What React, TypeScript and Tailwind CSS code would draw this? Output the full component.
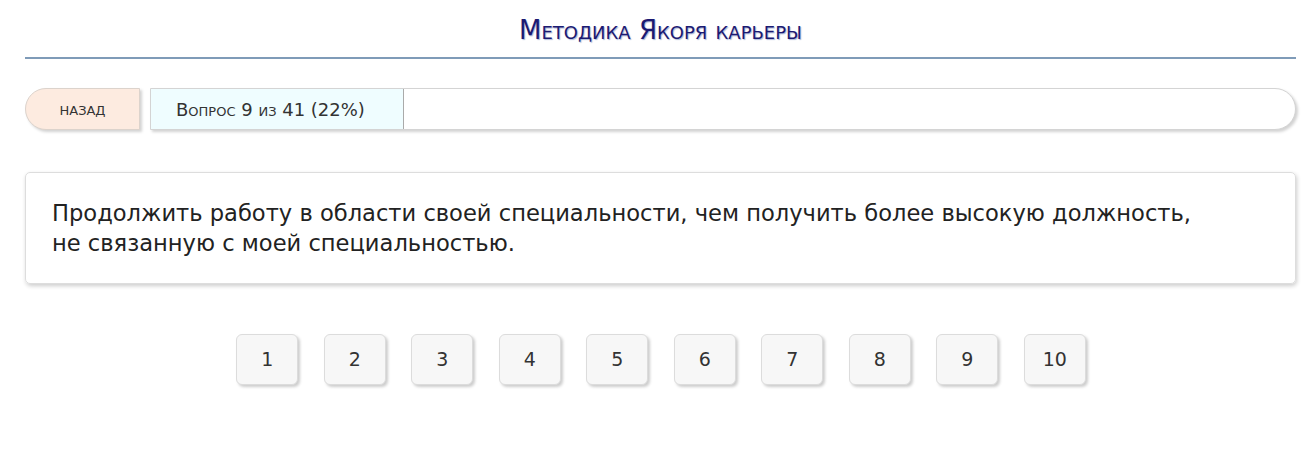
import React from 'react';

const answers = [1, 2, 3, 4, 5, 6, 7, 8, 9, 10];

export default function App() {
  return (
    <div className="min-h-screen bg-white pl-[25px] pr-[17px] font-['DejaVu_Sans',sans-serif] text-[#333]">
      {/* Header */}
      <h1 className="border-b-2 border-[#7f9bb8] pt-[14px] pb-[10px] text-center text-[26px] leading-[33px] text-[#1c1a72] [font-variant:small-caps] [text-shadow:1px_1px_1px_#a9b6d6]">
        Методика Якоря карьеры
      </h1>

      {/* Progress bar */}
      <div className="mt-[29px] flex h-[42px]">
        <button className="w-[115px] shrink-0 rounded-l-[21px] border border-[#dcd3cc] bg-[#fdebe0] pt-[3px] text-[13px] uppercase text-[#333] shadow-[2px_2px_3px_rgba(0,0,0,0.18)]">
          назад
        </button>
        <div className="ml-[10px] flex flex-1 overflow-hidden rounded-r-[21px] border border-[#d4d4d4] bg-white shadow-[2px_2px_3px_rgba(0,0,0,0.18)]">
          <div className="flex w-[253px] items-center border-r border-[#aaa] bg-[#effdff] pl-[25px] text-[18px] [font-variant:small-caps]">
            Вопрос 9 из 41 (22%)
          </div>
        </div>
      </div>

      {/* Question card */}
      <div className="mt-[42px] rounded-[5px] border border-[#ddd] px-[26px] py-[25px] text-[22.6px] leading-[30px] text-[#222] shadow-[1px_2px_4px_rgba(0,0,0,0.2)]">
        Продолжить работу в области своей специальности, чем получить более высокую должность,
        <br />
        не связанную с моей специальностью.
      </div>

      {/* Answers */}
      <div className="mt-[50px] flex justify-center gap-[25.5px] pl-[1px]">
        {answers.map((n) => (
          <button
            key={n}
            className="h-[51px] w-[62px] rounded-[6px] border border-[#dcdcdc] bg-[#f7f7f7] text-[19px] text-[#333] shadow-[2px_2px_3px_rgba(0,0,0,0.2)]"
          >
            {n}
          </button>
        ))}
      </div>
    </div>
  );
}
